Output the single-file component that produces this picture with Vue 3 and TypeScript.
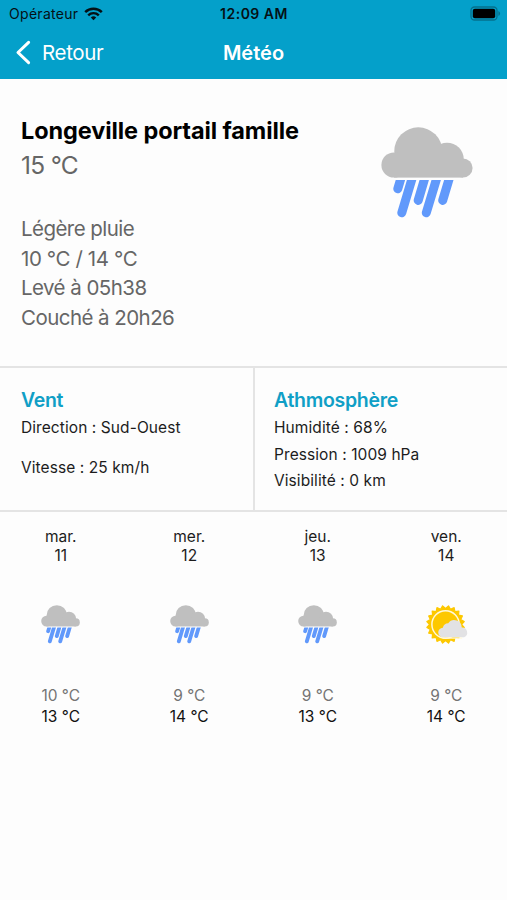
<script setup lang="ts">
interface Day {
  name: string
  date: number
  icon: 'rain' | 'sun'
  min: string
  max: string
}

const days: Day[] = [
  { name: 'mar.', date: 11, icon: 'rain', min: '10 °C', max: '13 °C' },
  { name: 'mer.', date: 12, icon: 'rain', min: '9 °C', max: '14 °C' },
  { name: 'jeu.', date: 13, icon: 'rain', min: '9 °C', max: '13 °C' },
  { name: 'ven.', date: 14, icon: 'sun', min: '9 °C', max: '14 °C' },
]

// Outline of the toothed sun ring, centred on (20, 20)
const teeth = 20
const sunPoints = Array.from({ length: teeth * 2 }, (_, i) => {
  const angle = (i / (teeth * 2)) * Math.PI * 2 - Math.PI / 2 + Math.PI / teeth
  const radius = i % 2 === 0 ? 19.4 : 16.4
  return `${(20 + radius * Math.cos(angle)).toFixed(2)},${(20 + radius * Math.sin(angle)).toFixed(2)}`
}).join(' ')
</script>

<template>
  <div class="screen">
    <svg class="defs" width="0" height="0" aria-hidden="true">
      <defs>
        <clipPath id="rain-clip"><rect x="0" y="53" width="92" height="40" /></clipPath>
        <symbol id="rain" viewBox="0 0 92 92">
          <g fill="#bfbfbf">
            <circle cx="37.3" cy="24.3" r="24" />
            <circle cx="66" cy="32.5" r="16.8" />
            <circle cx="13" cy="38" r="12.6" />
            <circle cx="82" cy="41" r="9.6" />
            <rect x="13" y="30" width="69" height="20.6" />
          </g>
          <g clip-path="url(#rain-clip)" stroke="#6199fb" stroke-width="9" stroke-linecap="round">
            <path d="M21.2 47 16.8 61.8M32.4 47 20.8 85.8M45 47 37.2 73.4M57 47 45.3 85.8M69.6 47 61.7 73.4" />
          </g>
        </symbol>
        <symbol id="sun" viewBox="0 0 44 40">
          <polygon :points="sunPoints" fill="#fdc800" stroke="#fdc800" stroke-width="1.2" stroke-linejoin="round" />
          <circle cx="20" cy="20" r="14" fill="#fdc800" stroke="#fff8dc" stroke-width="1.5" />
          <path d="M17.6 33.2a4.9 4.9 0 0 1-.4-9.8 6 6 0 0 1 5.6-4.6 7.6 7.6 0 0 1 13.8 4.4 5.1 5.1 0 0 1 2.4 9.8l-1.6.2z" fill="#e2e2e4" />
          <path d="M17 33.9h20" stroke="#fff8dc" stroke-width="1.3" />
        </symbol>
      </defs>
    </svg>

    <header class="header">
      <div class="status">
        <div class="carrier">
          <span class="carrier-name">Opérateur</span>
          <svg width="19" height="14" viewBox="0 0 19 14" fill="none" stroke="#051015">
            <path d="M1.2 5.2a12 12 0 0 1 16.6 0" stroke-width="2.5" />
            <path d="M4.2 8.3a7.6 7.6 0 0 1 10.6 0" stroke-width="2.4" />
            <path d="M9.5 13.3 6.8 10.5a4 4 0 0 1 5.4 0z" fill="#051015" stroke="none" />
          </svg>
        </div>
        <span class="clock">12:09 AM</span>
        <div class="battery">
          <svg width="31" height="15" viewBox="0 0 31 15">
            <rect x="1" y="1" width="26" height="13" rx="3.5" fill="none" stroke="#05708d" stroke-width="1.3" />
            <rect x="2.8" y="2.8" width="22.4" height="9.4" rx="2" fill="#000" />
            <path d="M28.4 5v5a2.7 2.7 0 0 0 0-5z" fill="#05708d" />
          </svg>
        </div>
      </div>
      <nav class="nav">
        <div class="back">
          <svg width="16" height="26" viewBox="0 0 16 26" fill="none" stroke="#fff" stroke-width="3" stroke-linecap="round" stroke-linejoin="round">
            <path d="M13.6 2.3 3 12.5l10.6 10.2" />
          </svg>
          <span class="back-label">Retour</span>
        </div>
        <h1 class="title">Météo</h1>
        <div></div>
      </nav>
    </header>

    <section class="current">
      <div class="info">
        <h2 class="place">Longeville portail famille</h2>
        <p class="temperature">15 °C</p>
        <div class="details">
          <p>Légère pluie</p>
          <p class="range">10 °C / 14 °C</p>
          <p>Levé à 05h38</p>
          <p>Couché à 20h26</p>
        </div>
      </div>
      <svg class="current-icon"><use href="#rain" /></svg>
    </section>

    <section class="panels">
      <div class="panel wind">
        <h3>Vent</h3>
        <p>Direction : Sud-Ouest</p>
        <p class="speed">Vitesse : 25 km/h</p>
      </div>
      <div class="panel air">
        <h3>Athmosphère</h3>
        <p>Humidité : 68%</p>
        <p>Pression : 1009 hPa</p>
        <p>Visibilité : 0 km</p>
      </div>
    </section>

    <section class="forecast">
      <div v-for="day in days" :key="day.date" class="day">
        <p class="day-name">{{ day.name }}</p>
        <p class="day-name">{{ day.date }}</p>
        <div class="day-icon">
          <svg v-if="day.icon === 'rain'" class="rain"><use href="#rain" /></svg>
          <svg v-else class="sun"><use href="#sun" /></svg>
        </div>
        <p class="min">{{ day.min }}</p>
        <p class="max">{{ day.max }}</p>
      </div>
    </section>
  </div>
</template>

<style>
body {
  background: #fdfdfd;
}
</style>

<style scoped>
.screen {
  width: 507px;
  height: 900px;
  overflow: hidden;
  background: #fdfdfd;
  font-family: Inter, "Liberation Sans", sans-serif;
  color: #1c1c1c;
}
h1, h2, h3, p {
  margin: 0;
  font-weight: 400;
  white-space: nowrap;
}
svg {
  display: block;
  flex: none;
}
.defs {
  position: absolute;
}
.header {
  height: 79px;
  box-sizing: border-box;
  background: #04a0ca;
}
.status {
  display: grid;
  grid-template-columns: 1fr auto 1fr;
  align-items: center;
  height: 27px;
  padding: 0 6px 0 9px;
  color: #051015;
}
.carrier {
  display: flex;
  align-items: center;
  gap: 6px;
}
.carrier-name {
  font-size: 14px;
  letter-spacing: 0.3px;
}
.clock {
  margin-left: -2px;
  font-size: 14px;
  font-weight: 600;
  letter-spacing: 0.5px;
}
.battery {
  display: flex;
  justify-content: flex-end;
}
.nav {
  display: grid;
  grid-template-columns: 1fr auto 1fr;
  align-items: center;
  height: 51px;
  padding: 0 15px;
  color: #fff;
}
.back {
  display: flex;
  align-items: center;
  gap: 11px;
}
.back-label {
  font-size: 20.5px;
  letter-spacing: -0.35px;
}
.title {
  font-size: 20px;
  font-weight: 600;
}
.current {
  display: flex;
  justify-content: space-between;
  height: 287px;
  padding: 0 34px 0 21px;
}
.info {
  padding-top: 36px;
}
.place {
  font-size: 23.5px;
  line-height: 32px;
  font-weight: 700;
  letter-spacing: -0.1px;
  color: #000;
}
.temperature {
  font-size: 24.5px;
  line-height: 36px;
  letter-spacing: -0.7px;
  color: #666;
}
.details {
  padding-top: 31px;
  font-size: 20.5px;
  line-height: 29.7px;
  letter-spacing: -0.55px;
  color: #666;
}
.range {
  letter-spacing: -0.4px;
}
.current-icon {
  width: 92px;
  height: 92px;
  margin-top: 48px;
}
.panels {
  display: grid;
  grid-template-columns: 253px 1fr;
  height: 142px;
  border-top: 2px solid #e4e4e4;
  border-bottom: 2px solid #e4e4e4;
}
.panel {
  padding: 17px 0 0 21px;
  font-size: 15.5px;
  line-height: 26.6px;
  letter-spacing: 0.08px;
}
.panel h3 {
  font-size: 19.5px;
  line-height: 30px;
  font-weight: 600;
  letter-spacing: -0.3px;
  color: #109fc6;
}
.air {
  padding-left: 19px;
  border-left: 2px solid #e4e4e4;
}
.speed {
  padding-top: 13px;
}
.forecast {
  display: grid;
  grid-template-columns: repeat(4, 1fr);
  margin: 0 -3.5px;
  padding-top: 15px;
  text-align: center;
}
.day-name {
  font-size: 15.5px;
  line-height: 19px;
}
.day-icon {
  display: flex;
  justify-content: center;
  padding: 40px 0 41px;
}
.rain {
  width: 39px;
  height: 39px;
}
.sun {
  width: 43px;
  height: 39px;
  margin-left: 3px;
}
.min,
.max {
  font-size: 15.5px;
  line-height: 21px;
}
.min {
  color: #747474;
}
.max {
  color: #111;
}
</style>
